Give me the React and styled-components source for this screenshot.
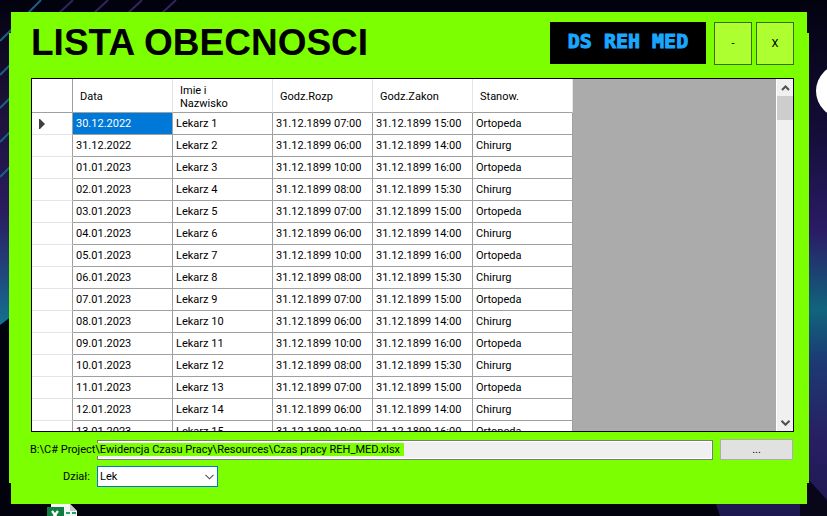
import React from "react";
import styled, { createGlobalStyle } from "styled-components";

const GlobalStyle = createGlobalStyle`
  * { box-sizing: border-box; }
  body { margin: 0; background: #02020f; }
  button, input, select { font: inherit; color: inherit; }
`;

const Desktop = styled.main`
  position: relative;
  isolation: isolate;
  display: flex;
  flex-direction: column;
  height: 100vh;
  padding: 12px 20px 0 11px;
  overflow: hidden;
  background: #02020f;
  color: #000;
  font: 11px/13px Roboto, "Liberation Sans", sans-serif;
`;

const Wallpaper = styled.svg`
  position: absolute;
  inset: 0;
  z-index: -1;
  width: 100%;
  height: 100%;
`;

const Window = styled.section`
  position: relative;
  isolation: isolate;
  flex: 1;
  min-height: 0;
  display: flex;
  flex-direction: column;
  padding: 10px 13px 17px 20px;
  background: #7cff00;

  &::before {
    content: "";
    position: absolute;
    z-index: -1;
    inset: 21px -2px;
    background: #7cff00;
  }
`;

const Header = styled.header`
  display: flex;
  align-items: flex-start;
  gap: 4px;
`;

const Title = styled.h1`
  flex: 1;
  margin: 0;
  font: bold 37px/42px "Liberation Sans", Arial, sans-serif;
  white-space: nowrap;
`;

const Logo = styled.div`
  width: 156px;
  height: 42px;
  margin-right: 4px;
  background: #000;
  color: #1aa7ff;
  text-align: center;
  white-space: nowrap;
  font: bold 20px/38px "DejaVu Sans Mono", monospace;
  -webkit-text-stroke: 1px #1aa7ff;
`;

const CaptionButton = styled.button`
  width: 38px;
  height: 43px;
  padding: 0;
  border: 1px solid #3d6b10;
  background: #adff2f;
`;

const GridFrame = styled.div`
  flex: 1;
  min-height: 0;
  display: flex;
  margin-top: 13px;
  border: 1px solid #000;
  background: #ababab;
`;

const GridView = styled.div`
  flex: 1;
  overflow: hidden;
`;

const Table = styled.table`
  table-layout: fixed;
  width: 541px;
  border-collapse: separate;
  border-spacing: 0;
  background: #fff;
`;

const HeadCell = styled.th`
  width: ${(p) => (p.$corner ? "41px" : "100px")};
  height: 34px;
  padding: 2px 30px 0 7px;
  border-right: 1px solid ${(p) => (p.$corner ? "#a0a0a0" : "#e5e5e5")};
  border-bottom: 1px solid #a0a0a0;
  font-weight: normal;
  text-align: left;
`;

const RowHead = styled.th`
  height: 22px;
  padding: 0 0 0 7px;
  border-right: 1px solid #a0a0a0;
  border-bottom: 1px solid #e5e5e5;
  text-align: left;

  svg { display: block; }
`;

const Cell = styled.td`
  height: 22px;
  padding: 0 3px;
  border-right: 1px solid #a0a0a0;
  border-bottom: 1px solid #a0a0a0;
  background: ${(p) => (p.$selected ? "#0078d7" : "#fff")};
  color: ${(p) => (p.$selected ? "#fff" : "#000")};
  white-space: nowrap;
`;

const ScrollBar = styled.div`
  width: 17px;
  display: flex;
  flex-direction: column;
  border-left: 1px solid #fff;
  background: #f0f0f0;
`;

const ScrollButton = styled.button`
  height: 17px;
  display: grid;
  place-items: center;
  padding: 0;
  border: 0;
  background: #f0f0f0;
`;

const ScrollTrack = styled.div`
  flex: 1;
`;

const ScrollThumb = styled.div`
  height: 24px;
  background: #cdcdcd;
`;

const FileRow = styled.div`
  display: flex;
  align-items: flex-end;
  gap: 7px;
  margin-top: 7px;
`;

const PathField = styled.div`
  position: relative;
  flex: 1;
  padding-left: 66px;
`;

const PathInput = styled.input`
  display: block;
  width: 100%;
  height: 20px;
  border: 1px solid #7a7a7a;
  outline: 1px solid #fff;
  outline-offset: -2px;
  background: #f0f0f0;
`;

const PathLabel = styled.label`
  position: absolute;
  top: 3px;
  left: -2px;
  padding: 0 4px 0 1px;
  background: #7cff00;
  white-space: nowrap;
`;

const BrowseButton = styled.button`
  width: 73px;
  height: 21px;
  margin-right: 1px;
  padding: 0;
  border: 1px solid #adadad;
  background: #e1e1e1;
`;

const FilterRow = styled.div`
  display: flex;
  align-items: center;
  gap: 7px;
  margin-top: 6px;
`;

const FilterLabel = styled.label`
  width: 59px;
  text-align: right;
`;

const SelectBox = styled.div`
  position: relative;
  width: 121px;

  svg {
    position: absolute;
    top: 8px;
    right: 4px;
    pointer-events: none;
  }
`;

const Select = styled.select`
  display: block;
  width: 100%;
  height: 21px;
  padding: 0 2px;
  appearance: none;
  border: 1px solid #0078d7;
  border-radius: 0;
  background: #fff;
`;

const DesktopIcons = styled.footer`
  height: 12px;
  flex: none;
  padding-left: 35px;
  overflow: hidden;

  svg { display: block; }
`;

const columns = ["Data", "Imie i Nazwisko", "Godz.Rozp", "Godz.Zakon", "Stanow."];
const dates = [
  "30.12.2022", "31.12.2022", "01.01.2023", "02.01.2023", "03.01.2023",
  "04.01.2023", "05.01.2023", "06.01.2023", "07.01.2023", "08.01.2023",
  "09.01.2023", "10.01.2023", "11.01.2023", "12.01.2023", "13.01.2023",
];
const shifts = [["07:00", "15:00"], ["06:00", "14:00"], ["10:00", "16:00"], ["08:00", "15:30"]];
const rows = dates.map((date, i) => {
  const [from, to] = shifts[i % 4];
  return [date, `Lekarz ${i + 1}`, `31.12.1899 ${from}`, `31.12.1899 ${to}`, i % 2 ? "Chirurg" : "Ortopeda"];
});

function Chevron({ down, thin }) {
  return (
    <svg width="9" height="6" viewBox="0 0 9 6" aria-hidden="true">
      <path
        d={down ? "M0.5 0.8 4.5 4.8 8.5 0.8" : "M1 5 4.5 1.5 8 5"}
        fill="none"
        stroke="#505050"
        strokeWidth={thin ? 1.1 : 2}
      />
    </svg>
  );
}

function Background() {
  return (
    <Wallpaper viewBox="0 0 827 516" preserveAspectRatio="none" aria-hidden="true">
      <defs>
        <linearGradient id="leftGlow" x1="0" y1="0" x2="0" y2="1">
          <stop offset="0" stopColor="#02020f" />
          <stop offset="0.3" stopColor="#1b1036" />
          <stop offset="0.65" stopColor="#2a1c60" />
          <stop offset="0.8" stopColor="#243c78" />
          <stop offset="1" stopColor="#127291" />
        </linearGradient>
        <linearGradient id="rightGlow" x1="0" y1="0" x2="0" y2="1">
          <stop offset="0" stopColor="#02020f" />
          <stop offset="0.25" stopColor="#130d38" />
          <stop offset="0.45" stopColor="#2a1c66" />
          <stop offset="0.6" stopColor="#10647d" />
          <stop offset="0.7" stopColor="#1c3a74" />
          <stop offset="0.85" stopColor="#271f62" />
          <stop offset="1" stopColor="#1e1850" />
        </linearGradient>
      </defs>
      <path d="M0 0H20V310L0 325Z" fill="url(#leftGlow)" />
      <path d="M800 0H827V516H720L716 504H800Z" fill="url(#rightGlow)" />
      <path d="M800 470 827 500V516H800Z" fill="#080719" />
      <g strokeWidth="2" fill="none">
        <path d="M0 41 41 0M0 75 20 55M0 108 20 88M0 142 20 122M0 177 20 157" stroke="#1a5f86" />
        <path d="M58 14 73 0M93 14 108 0M127 14 142 0M161 14 176 0" stroke="#30265a" />
      </g>
      <circle cx="843" cy="91" r="27" fill="#fff" />
    </Wallpaper>
  );
}

export default function App() {
  return (
    <Desktop>
      <GlobalStyle />
      <Background />
      <Window>
        <Header>
          <Title>LISTA OBECNOSCI</Title>
          <Logo>DS REH MED</Logo>
          <CaptionButton type="button">-</CaptionButton>
          <CaptionButton type="button">X</CaptionButton>
        </Header>
        <GridFrame>
          <GridView>
            <Table>
              <thead>
                <tr>
                  <HeadCell $corner />
                  {columns.map((c) => <HeadCell key={c} scope="col">{c}</HeadCell>)}
                </tr>
              </thead>
              <tbody>
                {rows.map((row, r) => (
                  <tr key={row[0]}>
                    <RowHead scope="row">
                      {r === 0 && (
                        <svg width="6" height="10" viewBox="0 0 6 10" aria-label="Current row">
                          <path d="M0 0H1L6 5 1 10H0Z" fill="#404040" />
                        </svg>
                      )}
                    </RowHead>
                    {row.map((value, c) => (
                      <Cell key={columns[c]} $selected={r === 0 && c === 0}>{value}</Cell>
                    ))}
                  </tr>
                ))}
              </tbody>
            </Table>
          </GridView>
          <ScrollBar>
            <ScrollButton type="button" aria-label="Scroll up"><Chevron /></ScrollButton>
            <ScrollTrack><ScrollThumb /></ScrollTrack>
            <ScrollButton type="button" aria-label="Scroll down"><Chevron down /></ScrollButton>
          </ScrollBar>
        </GridFrame>
        <FileRow>
          <PathField>
            <PathInput id="path" type="text" readOnly />
            <PathLabel htmlFor="path">
              B:\C# Project\Ewidencja Czasu Pracy\Resources\Czas pracy REH_MED.xlsx
            </PathLabel>
          </PathField>
          <BrowseButton type="button">...</BrowseButton>
        </FileRow>
        <FilterRow>
          <FilterLabel htmlFor="dept">Dział:</FilterLabel>
          <SelectBox>
            <Select id="dept" defaultValue="Lek"><option>Lek</option></Select>
            <Chevron down thin />
          </SelectBox>
        </FilterRow>
      </Window>
      <DesktopIcons>
        <svg width="32" height="12" viewBox="0 0 32 12" aria-hidden="true">
          <path d="M5 0H24L31 7V12H5Z" fill="#f4f4f4" />
          <path d="M24 0V7H31Z" fill="#c8c8c8" />
          <path d="M20 8h4v2h-4zM26 8h4v2h-4z" fill="#21a366" />
          <path d="M1 3H18V12H1Z" fill="#107c41" />
          <path d="M6 7 12 15M12 7 6 15" stroke="#fff" strokeWidth="2.4" />
        </svg>
      </DesktopIcons>
    </Desktop>
  );
}
